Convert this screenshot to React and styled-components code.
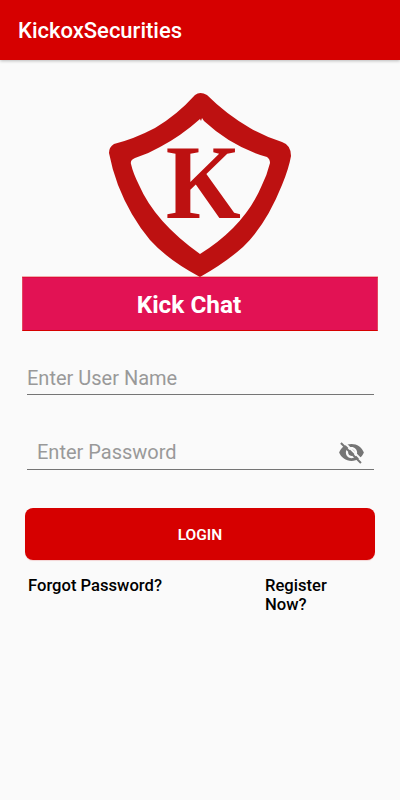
import React from "react";
import styled, { createGlobalStyle } from "styled-components";

const GlobalStyle = createGlobalStyle`
  * { box-sizing: border-box; }
  body { margin: 0; background: #fafafa; font-family: Roboto, "Noto Sans", sans-serif; }
`;

const Screen = styled.div`
  display: flex;
  flex-direction: column;
  height: 800px;
  overflow: hidden;
  background: #fafafa;
`;

const AppBar = styled.header`
  display: flex;
  align-items: center;
  flex: none;
  height: 60px;
  padding: 1px 18px 0;
  background: #d60000;
  box-shadow: 0 1px 3px rgba(0, 0, 0, 0.25);
`;

const Title = styled.h1`
  margin: 0;
  color: #fff;
  font-size: 22px;
  font-weight: 500;
  line-height: 26px;
`;

const Content = styled.main`
  display: flex;
  flex-direction: column;
  padding: 32px 22px 0;
`;

const Logo = styled.svg`
  display: block;
  align-self: center;
  width: 184px;
  height: 185px;
`;

const Banner = styled.div`
  display: flex;
  align-items: center;
  justify-content: center;
  width: 356px;
  height: 54px;
  padding: 0 22px 0 0;
  background: #e21254;
  border: 1px solid #e1485f;
  border-top-color: #e00a3c;
  border-bottom-color: #d60000;
  box-shadow: 0 -1px 0 rgba(214, 0, 0, 0.3);
  color: #fff;
  font-size: 24.4px;
  font-weight: 700;
`;

const Field = styled.label`
  display: flex;
  align-items: center;
  height: 35px;
  margin: ${(p) => p.$gap}px 4px 0 5px;
  padding: ${(p) => p.$drop}px ${(p) => p.$inset}px 0;
  border-bottom: 1px solid #757575;
`;

const Input = styled.input`
  flex: 1;
  min-width: 0;
  padding: 0;
  border: 0;
  outline: 0;
  background: transparent;
  font: 400 20px Roboto, sans-serif;
  &::placeholder { color: #999; opacity: 1; }
`;

const EyeIcon = styled.svg`
  width: 27px;
  height: 27px;
  margin-right: -1px;
  fill: #757575;
`;

const LoginButton = styled.button`
  height: 52px;
  margin: 38px 3px 0;
  padding: 1px 0 0;
  border: 0;
  border-radius: 8px;
  background: #d60000;
  box-shadow: 0 1px 1px rgba(214, 0, 0, 0.15);
  color: #fff;
  font: 600 15.5px Roboto, sans-serif;
`;

const Links = styled.nav`
  display: grid;
  grid-template-columns: 237px 80px;
  padding: 16px 6px 0;
`;

const TextLink = styled.a`
  color: #000;
  font-size: 16.6px;
  font-weight: 500;
  line-height: 19px;
`;

export default function App() {
  return (
    <Screen>
      <GlobalStyle />
      <AppBar>
        <Title>KickoxSecurities</Title>
      </AppBar>
      <Content>
        <Logo viewBox="108 92 184 185" role="img" aria-label="Kickox shield">
          <path
            fill="#bd1111"
            fillRule="evenodd"
            d="M195 95Q200 91 207 95Q226 114 250 128Q264 136 282 142Q291 145 291 156Q289 168 282 185Q266 225 243 247Q225 263 200 277Q168 260 150 240Q130 216 118 185Q112 169 109 153Q109 147 114 144Q134 139 155 128Q177 115 195 95ZM200 119Q181 136 160 147Q148 154 135 158Q130 160 131 164Q133 173 139 185Q155 222 200 254Q245 226 262 185Q267 175 270 163Q270 159 267 157Q232 147 204 121L202 118L201 121Z"
          />
          <text
            transform="translate(165.8 218) scale(0.975 1.07)"
            fill="#bd1111"
            fontFamily="Liberation Serif, serif"
            fontWeight="700"
            fontSize="99"
          >
            K
          </text>
        </Logo>
        <Banner>Kick Chat</Banner>
        <Field $gap={29} $inset={0} $drop={2}>
          <Input placeholder="Enter User Name" aria-label="User name" />
        </Field>
        <Field $gap={40} $inset={10} $drop={0}>
          <Input type="password" placeholder="Enter Password" aria-label="Password" />
          <EyeIcon viewBox="0 0 24 24" aria-hidden="true">
            <path d="M12 4.5C7 4.5 2.73 7.61 1 12c1.73 4.39 6 7.5 11 7.5s9.27-3.11 11-7.5c-1.73-4.39-6-7.5-11-7.5zM12 17c-2.76 0-5-2.24-5-5s2.24-5 5-5 5 2.24 5 5-2.24 5-5 5zm0-8c-1.66 0-3 1.34-3 3s1.34 3 3 3 3-1.34 3-3-1.34-3-3-3z" />
            <path d="M4.5 2L22.5 20" stroke="#fafafa" strokeWidth="1.8" />
            <path d="M2.6 3.6L20.4 21.4" stroke="#757575" strokeWidth="1.8" />
          </EyeIcon>
        </Field>
        <LoginButton>LOGIN</LoginButton>
        <Links>
          <TextLink>Forgot Password?</TextLink>
          <TextLink>Register Now?</TextLink>
        </Links>
      </Content>
    </Screen>
  );
}
